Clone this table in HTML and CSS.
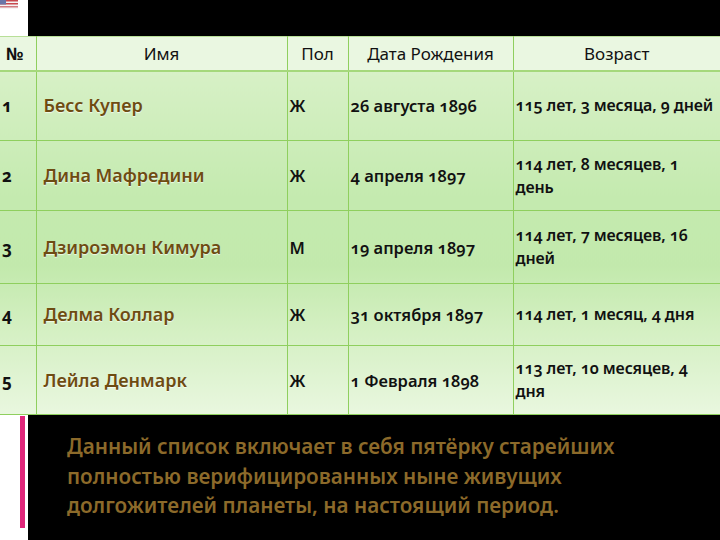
FILE: index.html
```html
<!DOCTYPE html>
<html lang="ru">
<head>
<meta charset="utf-8">
<link rel="stylesheet" href="styles.css">
</head>
<body>
<div class="slide">
  <div class="top">
    <div class="side side-top">
      <svg class="flag" width="18" height="9" viewBox="0 0 18 9">
        <rect width="18" height="9" fill="#f4f4f4"/>
        <rect y="0" width="18" height="1.5" fill="#c8484e"/>
        <rect y="3" width="18" height="1.5" fill="#c8484e"/>
        <rect y="6" width="18" height="1.5" fill="#d07a80"/>
        <rect width="6" height="4.5" fill="#6a76a8"/>
      </svg>
    </div>
    <div class="top-dark"></div>
  </div>
  <table class="grid">
    <colgroup>
      <col class="c-num"><col class="c-name"><col class="c-sex"><col class="c-date"><col class="c-age">
    </colgroup>
    <thead>
      <tr class="head">
        <th class="h-num">№</th>
        <th>Имя</th>
        <th>Пол</th>
        <th>Дата Рождения</th>
        <th>Возраст</th>
      </tr>
    </thead>
    <tbody>
      <tr class="r1">
        <td class="num">1</td><td class="name">Бесс Купер</td><td>Ж</td><td>26 августа 1896</td><td class="age">115 лет, 3 месяца, 9 дней</td>
      </tr>
      <tr class="r2">
        <td class="num">2</td><td class="name">Дина Мафредини</td><td>Ж</td><td>4 апреля 1897</td><td class="age">114 лет, 8 месяцев, 1<br>день</td>
      </tr>
      <tr class="r3">
        <td class="num">3</td><td class="name">Дзироэмон Кимура</td><td>М</td><td>19 апреля 1897</td><td class="age">114 лет, 7 месяцев, 16<br>дней</td>
      </tr>
      <tr class="r4">
        <td class="num">4</td><td class="name">Делма Коллар</td><td>Ж</td><td>31 октября 1897</td><td class="age">114 лет, 1 месяц, 4 дня</td>
      </tr>
      <tr class="r5">
        <td class="num">5</td><td class="name">Лейла Денмарк</td><td>Ж</td><td>1 Февраля 1898</td><td class="age">113 лет, 10 месяцев, 4<br>дня</td>
      </tr>
    </tbody>
  </table>
  <div class="bottom">
    <div class="side side-bottom"><div class="accent"></div></div>
    <div class="note">
      <p>Данный список включает в себя пятёрку старейших<br>полностью верифицированных ныне живущих<br>долгожителей планеты, на настоящий период.</p>
    </div>
  </div>
</div>
</body>
</html>
```
FILE: styles.css
```css
html, body {
  margin: 0;
  padding: 0;
  background: #000;
}
.slide {
  width: 720px;
  height: 540px;
  background: #000;
  overflow: hidden;
  font-family: "Noto Sans", "Open Sans", sans-serif;
}
.top {
  display: flex;
  height: 36px;
}
.side {
  width: 28px;
  background: #fff;
  flex: none;
}
.flag {
  display: block;
}
.top-dark {
  flex: 1;
  background: #000;
}
.grid {
  width: 720px;
  border-collapse: collapse;
  table-layout: fixed;
  background: linear-gradient(#e9f7df 0px, #d6f0c5 40px, #c4eaaf 160px, #c2e9ac 230px, #d3efc1 290px, #e9f7df 379px);
}
.c-num { width: 36px; }
.c-name { width: 251px; }
.c-sex { width: 61px; }
.c-date { width: 165px; }
.c-age { width: 207px; }
.grid th, .grid td {
  border: 1px solid #8fcf5e;
  padding: 0 2px;
  vertical-align: middle;
  text-align: left;
  color: #111;
}
.grid tr > :first-child { border-left: none; }
.grid tr > :last-child { border-right: none; }
.head {
  height: 34px;
  background: #eaf7e1;
}
.head th {
  font-weight: 400;
  font-size: 17px;
  text-align: center;
  border-top: 1px solid #b8df98;
  border-bottom: 2px solid #a5d87c;
}
.head th.h-num {
  text-align: left;
  padding-left: 6px;
  font-weight: 700;
}
.grid td {
  font-size: 16.5px;
  font-weight: 600;
  line-height: 23px;
  font-variant-numeric: oldstyle-nums;
}
.grid td.age {
  font-size: 16px;
  white-space: nowrap;
  letter-spacing: -0.1px;
}
.grid td.num {
  padding-left: 2px;
  font-weight: 700;
  font-size: 17px;
}
.grid td.name {
  padding-left: 7px;
  font-size: 18px;
  color: #6e4c12;
  text-shadow: 0 1px 1px rgba(255,255,255,0.7);
}
.r1 { height: 70px; }
.r2 { height: 70px; }
.r3 { height: 73px; }
.r4 { height: 62px; }
.r5 { height: 69px; }
.bottom {
  display: flex;
  height: 125px;
}
.accent {
  margin-left: 20px;
  margin-top: 1px;
  width: 5px;
  height: 112px;
  background: #e0267a;
}
.note {
  flex: 1;
  background: #000;
  padding: 17px 0 0 39px;
}
.note p {
  margin: 0;
  font-size: 20.7px;
  line-height: 29.5px;
  color: #8c6a2a;
  font-weight: 600;
  letter-spacing: 0;
  white-space: nowrap;
}
```
